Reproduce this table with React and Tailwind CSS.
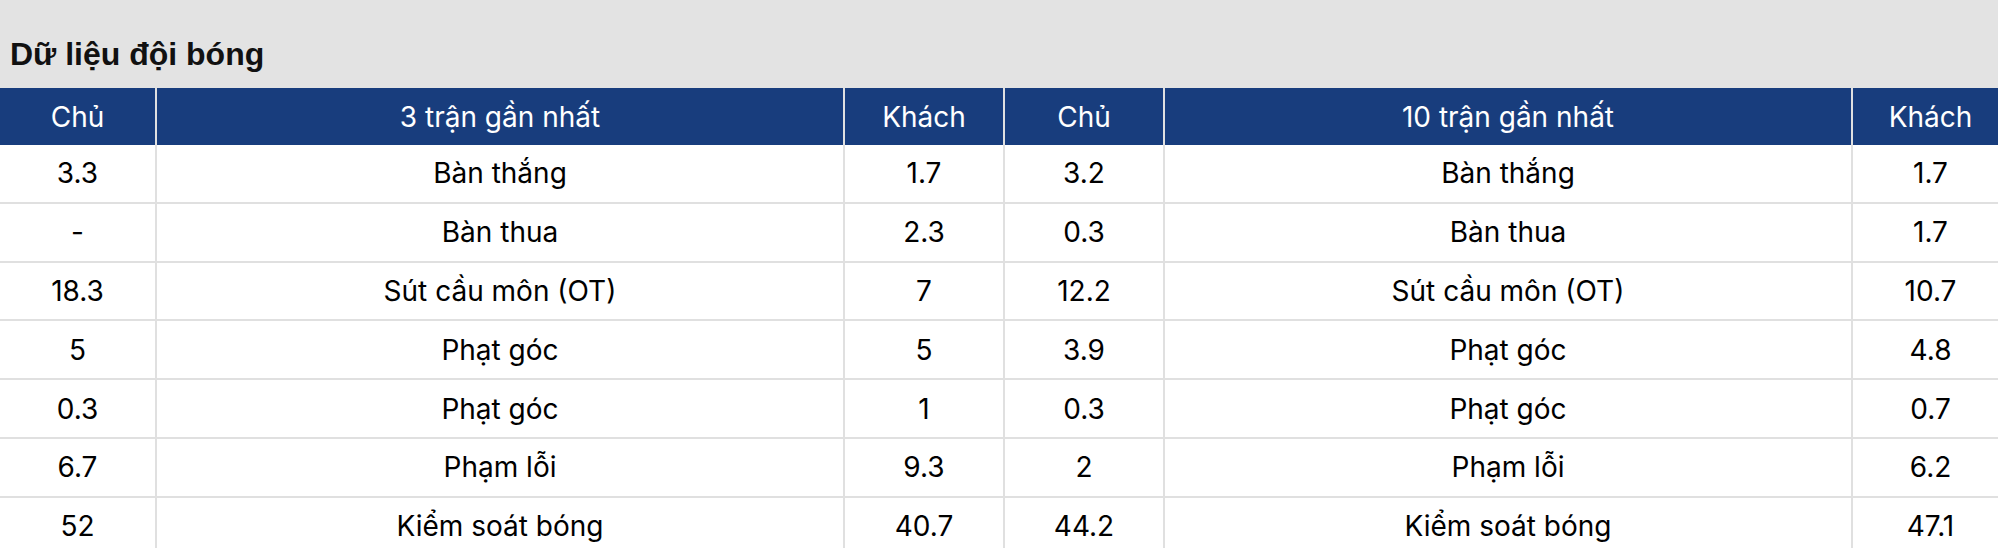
import React from "react";

const rows = [
  ["3.3", "Bàn thắng", "1.7", "3.2", "Bàn thắng", "1.7"],
  ["-", "Bàn thua", "2.3", "0.3", "Bàn thua", "1.7"],
  ["18.3", "Sút cầu môn (OT)", "7", "12.2", "Sút cầu môn (OT)", "10.7"],
  ["5", "Phạt góc", "5", "3.9", "Phạt góc", "4.8"],
  ["0.3", "Phạt góc", "1", "0.3", "Phạt góc", "0.7"],
  ["6.7", "Phạm lỗi", "9.3", "2", "Phạm lỗi", "6.2"],
  ["52", "Kiểm soát bóng", "40.7", "44.2", "Kiểm soát bóng", "47.1"],
];

const header = ["Chủ", "3 trận gần nhất", "Khách", "Chủ", "10 trận gần nhất", "Khách"];
const widths = ["w-[155px]", "w-[688px]", "w-[160px]", "w-[160px]", "w-[688px]", "w-[157px]"];

export default function App() {
  return (
    <div className="w-[1998px] h-[548px] overflow-hidden bg-white" style={{ fontFamily: "Inter, 'Noto Sans', sans-serif" }}>
      <div className="h-[88px] bg-[#e3e3e3] flex items-center pt-[20px] pl-[10px]">
        <h1 className="text-[32px] font-bold text-[#111111] leading-none" style={{ fontFamily: "'Liberation Sans', Arial, sans-serif" }}>
          Dữ liệu đội bóng
        </h1>
      </div>
      <div className="w-[2008px]">
        <div className="flex h-[57px] bg-[#183d7d] text-white">
          {header.map((h, i) => (
            <div
              key={i}
              className={`${widths[i]} shrink-0 flex items-center justify-center text-[28px] ${i > 0 ? "border-l-2 border-[#e0e0e0]" : ""}`}
            >
              {h}
            </div>
          ))}
        </div>
        {rows.map((r, ri) => (
          <div key={ri} className="flex h-[58.8px] border-b-2 border-[#e0e0e0] text-black">
            {r.map((c, i) => (
              <div
                key={i}
                className={`${widths[i]} shrink-0 flex items-center justify-center text-[28px] ${i > 0 ? "border-l-2 border-[#e0e0e0]" : ""}`}
              >
                {c}
              </div>
            ))}
          </div>
        ))}
      </div>
    </div>
  );
}
